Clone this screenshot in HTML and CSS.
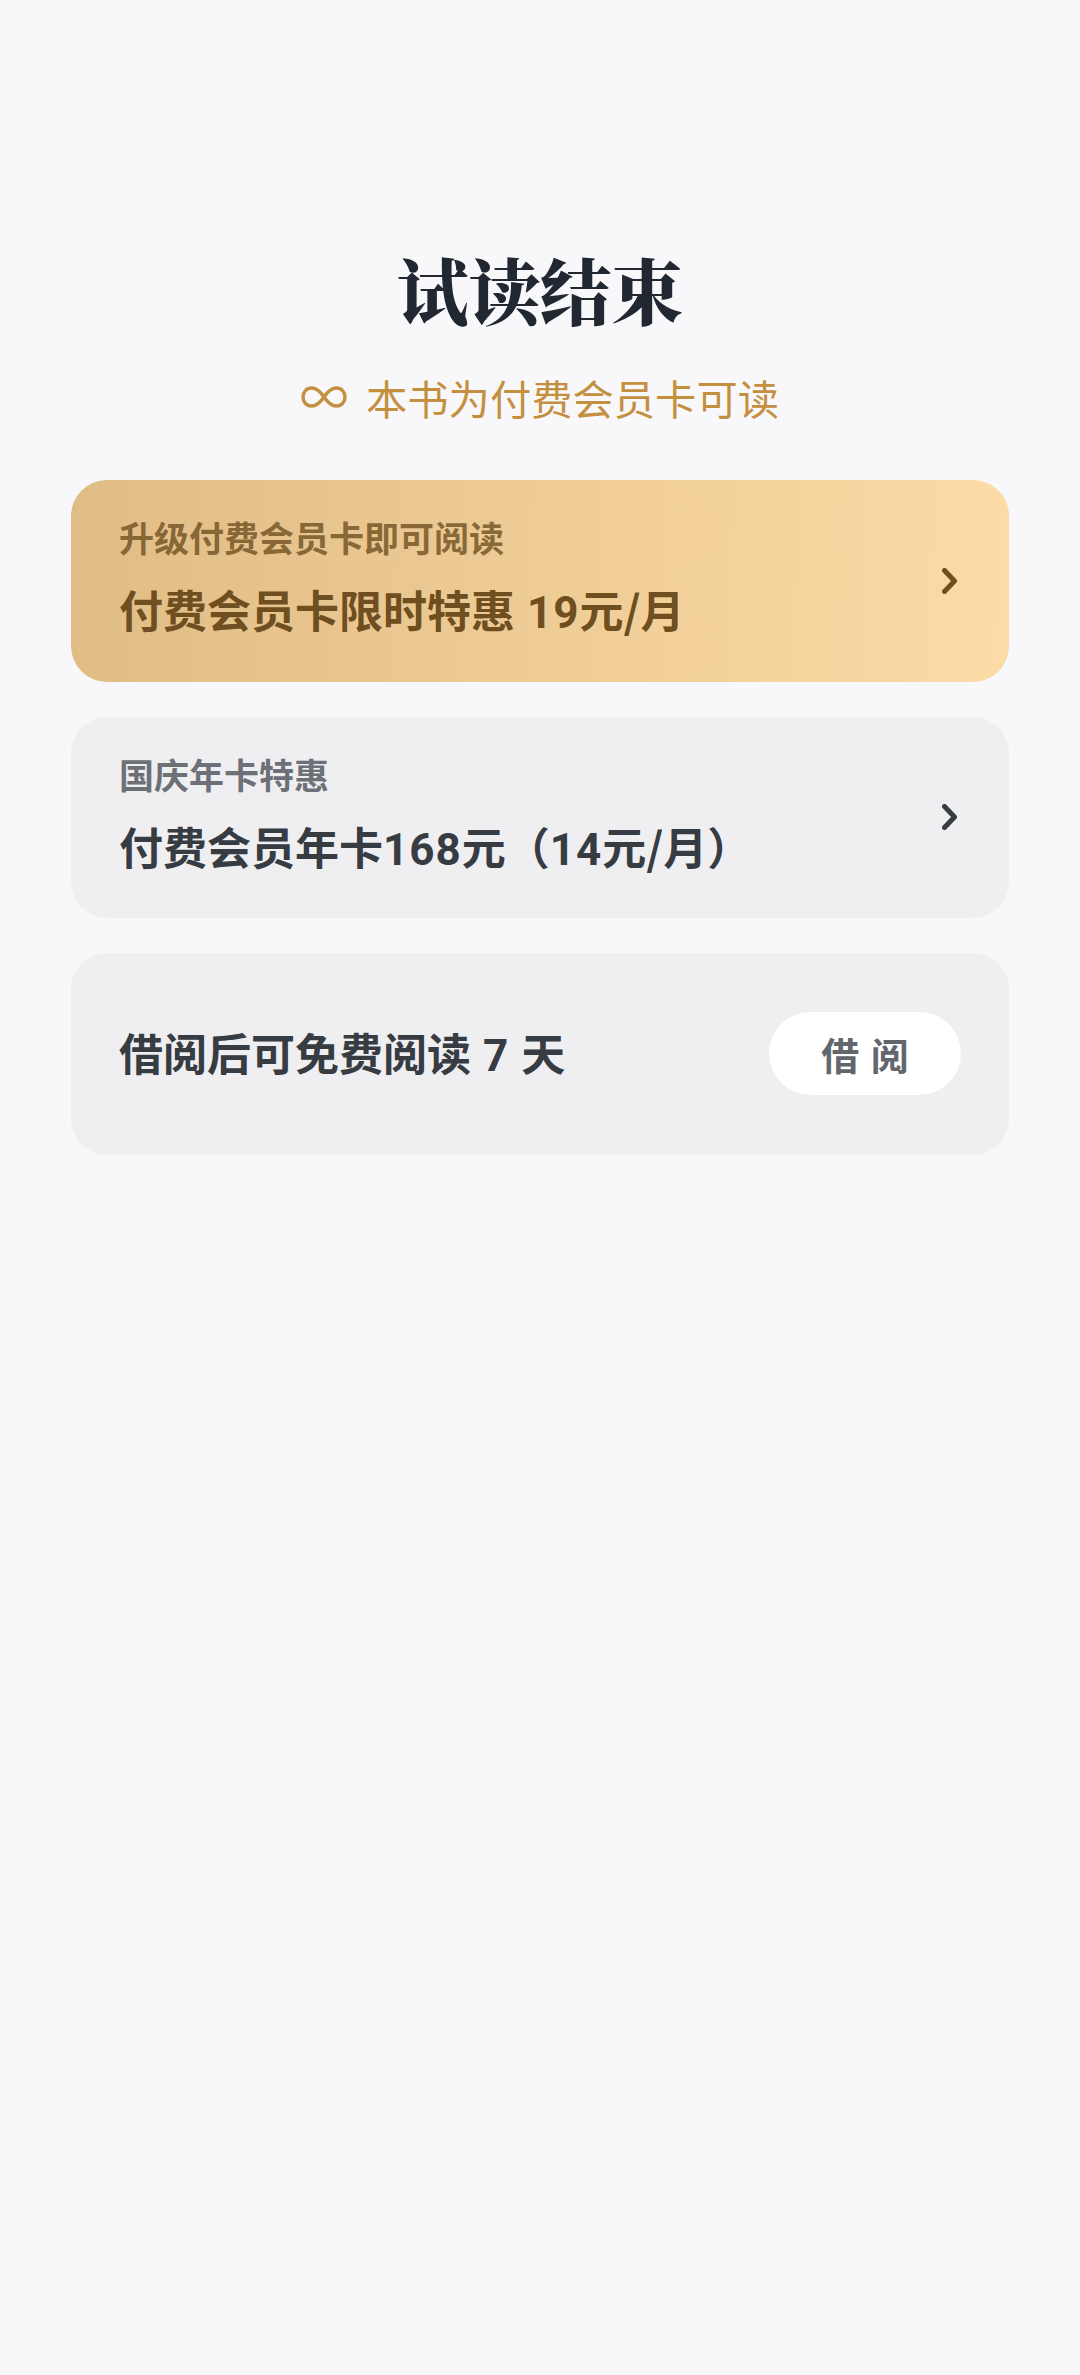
FILE: index.html
```html
<!DOCTYPE html>
<html lang="zh-CN">
<head>
<meta charset="utf-8">
<title>试读结束</title>
<link rel="stylesheet" href="styles.css">
</head>
<body>
<main class="page">
  <h1 class="title">试读结束</h1>
  <p class="subtitle">
    <svg class="inf" viewBox="0 0 46 22" width="46" height="22" aria-hidden="true"><path d="M23 11C19 5 15.500 2 10.500 2 5.500 2 2 6 2 11s3.500 9 8.500 9c5 0 8.500-3 12.500-9s7.500-9 12.500-9C40.500 2 44 6 44 11s-3.500 9-8.500 9c-5 0-8.500-3-12.500-9z"/></svg>
    <span>本书为付费会员卡可读</span>
  </p>
  <section class="cards">
    <a class="card gold">
      <div class="text">
        <div class="small">升级付费会员卡即可阅读</div>
        <div class="big">付费会员卡限时特惠 <span class="num">19</span>元/月</div>
      </div>
      <svg class="chev" viewBox="0 0 16 26" width="16" height="26" aria-hidden="true"><path d="M2.500 2.500 12.500 13 2.500 23.500"/></svg>
    </a>
    <a class="card grey">
      <div class="text">
        <div class="small">国庆年卡特惠</div>
        <div class="big">付费会员年卡<span class="num">168</span>元（<span class="num">14</span>元/月）</div>
      </div>
      <svg class="chev" viewBox="0 0 16 26" width="16" height="26" aria-hidden="true"><path d="M2.500 2.500 12.500 13 2.500 23.500"/></svg>
    </a>
    <div class="card grey">
      <div class="big">借阅后可免费阅读 <span class="num">7</span> 天</div>
      <button class="borrow">借 阅</button>
    </div>
  </section>
</main>
</body>
</html>
```

FILE: styles.css
```css
* { box-sizing: border-box; }
html, body { margin: 0; padding: 0; }
body {
  width: 1080px;
  height: 2375px;
  background: #f8f8fb;
  font-family: "Noto Sans CJK SC", sans-serif;
  overflow: hidden;
}
.page { padding: 238px 71px 0 71px; display: flex; flex-direction: column; }
.title {
  margin: 0;
  height: 100px;
  line-height: 100px;
  text-align: center;
  font-family: "Noto Serif CJK SC", "Source Han Serif SC", "Noto Sans CJK SC", serif;
  font-size: 71.500px;
  font-weight: 900;
  color: #212832;
}
.subtitle {
  margin: 31px 0 0;
  height: 56px;
  display: flex;
  align-items: center;
  justify-content: center;
  gap: 19px;
  font-size: 41.300px;
  line-height: 56px;
  color: #c4903f;
}
.inf { fill: none; stroke: #c4903f; stroke-width: 3.500; }
.cards { margin-top: 55px; display: flex; flex-direction: column; gap: 35px; }
.card {
  height: 201.500px;
  border-radius: 36px;
  padding: 0 48px 0 48px;
  display: flex;
  align-items: center;
  justify-content: space-between;
}
.gold { background: linear-gradient(92deg, #e0bd85 0%, #fddba6 100%); color: #6f4e1f; }
.grey { background: #efeff2; color: #373c43; }
.text { display: flex; flex-direction: column; gap: 18px; padding-bottom: 5px; }
.small { font-size: 35px; line-height: 48px; font-weight: 700; opacity: .78; }
.grey .small { color: #6d7177; opacity: 1; }
.big { font-size: 44px; line-height: 60px; font-weight: 700; word-spacing: 2px; }
.num { font-family: Roboto, sans-serif; font-weight: 700; letter-spacing: 1px; }
.chev { margin-right: 3px; fill: none; stroke: currentColor; stroke-width: 5; stroke-linecap: round; stroke-linejoin: round; }
.borrow {
  width: 192px;
  height: 83px;
  border: 0;
  border-radius: 42px;
  background: #fff;
  color: #62666d;
  font: 700 38px "Noto Sans CJK SC", sans-serif;
  word-spacing: 3px;
}
```
